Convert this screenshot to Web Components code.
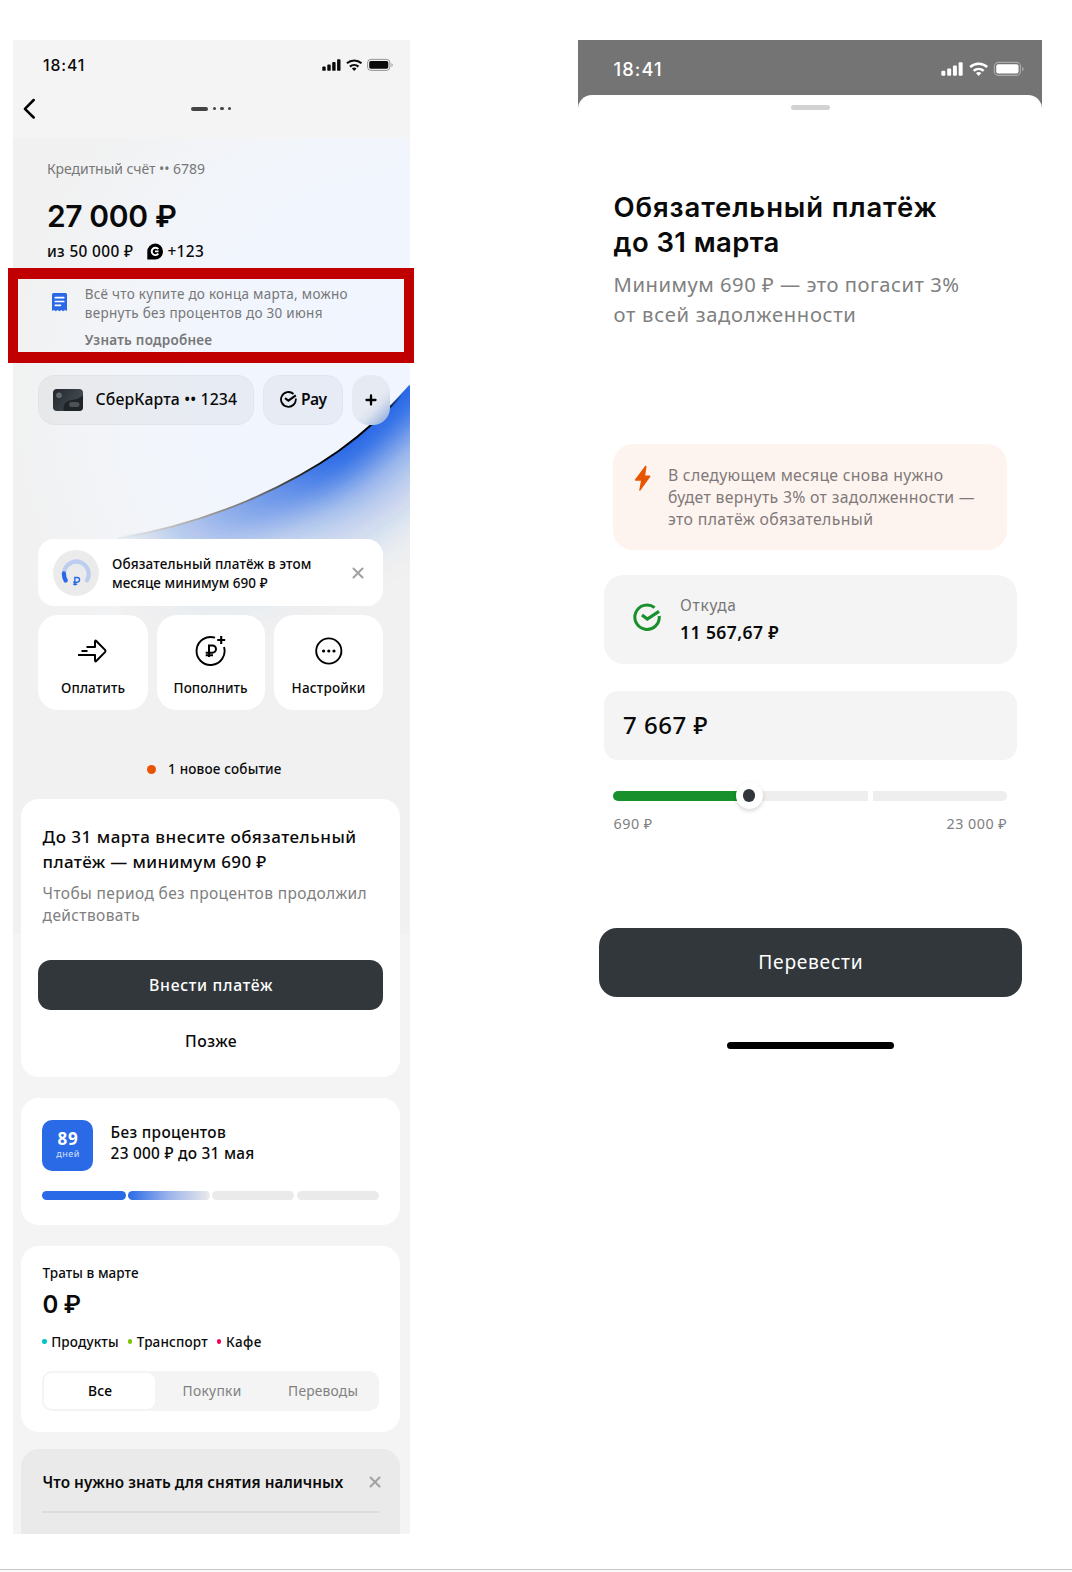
<!DOCTYPE html>
<html lang="ru">
<head>
<meta charset="utf-8">
<title>Кредитный счёт</title>
<style>
html,body{margin:0;background:#fff}
body{font-family:"Noto Sans","Open Sans",sans-serif;color:#0a0a0a}
</style>
</head>
<body>
<bank-board></bank-board>
<script>
const base = `*{box-sizing:border-box}:host{display:block;box-sizing:border-box}svg{display:block;flex:none}`;
function define(name, css, html, setup){
  const tpl = document.createElement('template');
  tpl.innerHTML = '<style>' + base + css + '</style>' + html;
  customElements.define(name, class extends HTMLElement{
    constructor(){ super(); this.attachShadow({mode:'open'}).appendChild(tpl.content.cloneNode(true)); }
    connectedCallback(){ if(setup) setup(this, this.shadowRoot); }
  });
}

/* One line of text: s = size, w = line width, l = line height, f = weight */
define('ui-text', `:host{white-space:pre;width:max-content;flex:none;padding:var(--drop,1px) 0 0 .6px}span{display:inline-block;vertical-align:top}:host([d]){font-family:Inter,"Noto Sans",sans-serif;padding-top:0}`,
 `<span><slot></slot></span>`, (el, root) => {
  const a = n => el.getAttribute(n);
  el.style.fontSize = (a('s') || 14) + 'px';
  el.style.lineHeight = (a('l') || 20) + 'px';
  el.style.height = (a('l') || 20) + 'px';
  if(a('f')) el.style.fontWeight = a('f');
  if(a('w')){
    const sp = root.querySelector('span');
    const nat = sp.getBoundingClientRect().width, n = el.textContent.length;
    el.style.letterSpacing = ((+a('w') - nat) / n).toFixed(3) + 'px';
    el.style.width = a('w') + 'px';
  }
});

define('status-icons', ``, `
<svg width="72" height="14" viewBox="0 0 72 14" fill="currentColor">
<rect x=".3" y="8.6" width="3.4" height="4.2" rx=".9"/><rect x="5.3" y="6.6" width="3.4" height="6.2" rx=".9"/><rect x="10.2" y="4" width="3.4" height="8.8" rx=".9"/><rect x="15.1" y="1.2" width="3.4" height="11.6" rx=".9"/>
<g fill="none" stroke="currentColor" stroke-width="2.1"><path d="M24.9 5.3a11 11 0 0 1 14.6 0"/><path d="M27.9 8.6a6.6 6.6 0 0 1 8.6 0"/></g><path d="M29.9 10.5a3.7 3.7 0 0 1 4.6 0L32.2 13z"/>
<rect x="45.6" y="1.4" width="22.3" height="11" rx="3.3" fill="none" stroke="currentColor" stroke-opacity=".4"/><rect x="47.2" y="3" width="19.1" height="7.8" rx="1.7"/><path d="M69.5 5.2v3.6c1.5-.5 1.5-3.1 0-3.6z" opacity=".45"/></svg>`);

define('phone-header', `:host{height:98px;background:#f4f4f4}
.st{display:flex;align-items:center;justify-content:space-between;height:50px;padding:0 16px 0 29px}
.nav{display:grid;grid-template-columns:40px 1fr 40px;height:37px;align-items:center;padding-left:10px}
.pg{display:flex;gap:4.2px;align-items:center;justify-content:center;padding-right:11px}.pg i{width:3.4px;height:3.4px;border-radius:50%;background:#444}.pg i:first-child{width:17.5px;height:4px;border-radius:2px}`,
`<div class="st"><ui-text d s="15.8" w="42" f="500" style="padding-top:.5px;margin-left:.5px">18:41</ui-text><status-icons></status-icons></div>
<div class="nav"><svg width="14" height="22" viewBox="0 0 14 22" fill="none" stroke="#000" stroke-width="2.5" stroke-linecap="round" stroke-linejoin="round"><path d="M10.700 2 1.900 10.800l8.800 8.700"/></svg><div class="pg"><i></i><i></i><i></i><i></i></div></div>`);

define('hero-art', `:host{position:absolute;inset:98px 0 auto 0;z-index:-1}`, `
<svg width="397" height="796" viewBox="13 138 397 796">
<defs>
<radialGradient id="bg" gradientUnits="userSpaceOnUse" cx="410" cy="390" r="410"><stop offset="0" stop-color="#f0f5ff"/><stop offset=".45" stop-color="#f1f5fe"/><stop offset=".68" stop-color="#f2f5fa"/><stop offset="1" stop-color="#f1f1f1"/></radialGradient>
<linearGradient id="ln" gradientUnits="userSpaceOnUse" x1="115" y1="538" x2="400" y2="390"><stop offset="0" stop-color="#ccc" stop-opacity="0"/><stop offset=".18" stop-color="#bbb"/><stop offset=".48" stop-color="#666"/><stop offset=".7" stop-color="#000"/><stop offset=".93" stop-color="#000"/><stop offset="1" stop-color="#2a6ae6"/></linearGradient>
<linearGradient id="bl" gradientUnits="userSpaceOnUse" x1="120" y1="538" x2="370" y2="430"><stop offset="0" stop-color="#2a6ae6" stop-opacity="0"/><stop offset=".35" stop-color="#2a6ae6" stop-opacity=".38"/><stop offset=".62" stop-color="#2a6ae6" stop-opacity=".66"/><stop offset=".85" stop-color="#2365e6"/></linearGradient>
<clipPath id="u"><path d="M410 385.700C365 437 319 470 247 501 204 519 165 531 117 538L120 640H410z"/></clipPath>
<filter id="f1" x="-30%" y="-50%" width="160%" height="200%"><feGaussianBlur stdDeviation="18"/></filter>
<filter id="f2" x="-30%" y="-50%" width="160%" height="200%"><feGaussianBlur stdDeviation="25"/></filter>
</defs>
<rect x="13" y="138" width="397" height="796" fill="#f1f1f1"/>
<rect x="13" y="138" width="397" height="480" fill="url(#bg)"/>
<g clip-path="url(#u)"><rect x="13" y="370" width="397" height="300" fill="#f1f1f1"/>
<path d="M480 310C365 437 319 470 247 501 204 519 165 531 117 538" fill="none" stroke="url(#bl)" stroke-opacity=".32" stroke-width="168" filter="url(#f2)"/>
<path d="M480 300C365 430 319 466 247 497 204 515 165 527 117 534" fill="none" stroke="url(#bl)" stroke-width="72" filter="url(#f1)"/></g>
<path d="M410 385.700C365 437 319 470 247 501 204 519 165 531 117 538" fill="none" stroke="url(#ln)" stroke-width="1.9"/>
</svg>`);

define('account-summary', `:host{padding:20px 0 0 33.300px}.r{display:flex;align-items:center}svg{margin:1.500px 4px 0 14px}`, `
<ui-text s="14" w="158" style="color:#777">Кредитный счёт •• 6789</ui-text>
<ui-text d s="30" l="36" w="129.500" f="600" style="margin-top:20px">27 000 ₽</ui-text>
<div class="r" style="margin-top:6.500px"><ui-text s="15.4" w="86.500" f="500">из 50 000 ₽</ui-text>
<svg width="16" height="17" viewBox="0 0 16 17"><path d="M8 .5a8 8 0 1 1 0 16H.3V8.500A8 8 0 0 1 8 .5z"/><path d="M11.300 6.100A3.700 3.700 0 1 0 11.300 10.700M8 8.400h3.500" fill="none" stroke="#fff" stroke-width="1.900"/></svg>
<ui-text s="15.4" w="36.700" f="500">+123</ui-text></div>`);

define('grace-note', `:host{margin:7px 0 0 -5px;width:406px;height:95px;border:solid #c00000;border-width:11px 10px;padding:5px 0 0 33.500px;color:#777}
:host{display:flex;gap:17.700px}svg{margin-top:9.500px}`, `
<svg width="15" height="19" viewBox="0 0 15 19"><path fill="#2a6ae6" d="M1.500 0h12A1.500 1.500 0 0 1 15 1.500V18l-2-1.100-1.800 1.400-1.900-1.400-1.800 1.400-1.900-1.400-1.800 1.400L2 16.900 0 18V1.500A1.500 1.500 0 0 1 1.500 0z"/><path d="M3.300 4.700h8.400M3.300 8.500h8.400M3.300 12.300h5.200" stroke="#fff" stroke-width="1.700" stroke-linecap="round"/></svg>
<div><ui-text s="13.5" l="19" w="263">Всё что купите до конца марта, можно</ui-text><ui-text s="13.5" l="19" w="238">вернуть без процентов до 30 июня</ui-text><ui-text s="13.5" l="19" w="127.500" f="600" style="margin-top:8px">Узнать подробнее</ui-text></div>`);

define('card-pill', `:host{display:flex;align-items:center;height:50px;border-radius:17px;background:rgba(20,20,20,.045);border:1px solid rgba(0,0,0,.025);--drop:0px}`, `<slot></slot>`);
define('pill-row', `:host{display:flex;gap:9px;margin:12px 0 0 25px}`, `
<card-pill style="width:216px;padding-left:14px;gap:12px">
<svg width="30" height="22" viewBox="0 0 30 22"><defs><linearGradient id="k" x1="0" x2="1" y2=".5"><stop stop-color="#23282d"/><stop offset="1" stop-color="#454d53"/></linearGradient></defs><rect width="30" height="22" rx="4" fill="url(#k)"/><path d="M10.500 19c.5-5 2.500-7 8-8s8-1.500 11.500-5v12a4 4 0 0 1-4 4H12q-2 0-1.500-3z" fill="#1f2428"/><circle cx="6" cy="6.300" r="2.800" fill="#646b70"/><rect x="16" y="13" width="10.500" height="5" rx="2.500" fill="#4a5258"/></svg>
<ui-text s="15.8" w="141.500" f="500" style="margin-top:-1px">СберКарта •• 1234</ui-text></card-pill>
<card-pill style="width:80px;padding-left:16px;gap:3.400px">
<svg width="17" height="17" viewBox="0 0 17 17" fill="none" stroke="#000" stroke-width="1.800"><path d="M13.500 3A7.400 7.400 0 1 0 15.800 7.500"/><path d="m5 7.200 3.400 2.400 7.400-5.200" stroke-width="2.100"/></svg>
<ui-text s="15.6" w="25.500" f="600" style="margin-top:-1px">Pay</ui-text></card-pill>
<card-pill style="width:38px;justify-content:center;border:0;background:linear-gradient(135deg,#e6eaf3 54%,#dbe2ee 66%,#a9bde2 85%,#7fa0dc)"><svg width="12" height="12" viewBox="0 0 12 12" stroke="#000" stroke-width="2.300" stroke-linecap="round"><path d="M1.500 6h9M6 1.500v9"/></svg></card-pill>`);

define('close-mark', ``, `<svg width="12" height="12" viewBox="0 0 12 12" stroke="#a2a2a2" stroke-width="2.100" stroke-linecap="round"><path d="m1.500 1.500 9 9M10.500 1.500l-9 9"/></svg>`);

define('payment-banner', `:host{display:flex;align-items:center;height:67px;margin:114px 0 0 25px;width:345px;padding:1px 19.500px 0 15px;background:#fff;border-radius:16px}.t{flex:1;padding-left:12.500px}`, `
<svg width="46" height="46" viewBox="0 0 46 46"><circle cx="23" cy="23" r="23" fill="#ebebeb"/><g fill="none" stroke-width="4.300" stroke-linecap="round"><path d="M11.200 21.400A12.400 12.400 0 1 1 34 30.300" stroke="#bccdf0"/><path d="M10.900 23.500c0 3 .5 5 1.800 7" stroke="#2a6ae6"/></g><path d="M21.800 35.500v-8h2.400a2.300 2.300 0 0 1 0 4.700h-4M20.200 34.200h4" fill="none" stroke="#2a6ae6" stroke-width="1.400"/></svg>
<div class="t"><ui-text s="13.5" l="19" w="199.500" f="500">Обязательный платёж в этом</ui-text><ui-text s="13.5" l="19" w="155.500" f="500">месяце минимум 690 ₽</ui-text></div><close-mark></close-mark>`);

define('action-tile', `:host{display:flex;flex-direction:column;align-items:center;height:95px;background:#fff;border-radius:20px;padding-top:20px;gap:10.400px}`, `<slot></slot>`);
define('action-row', `:host{display:grid;grid-template-columns:110px 108px 109px;gap:9px;margin:9px 0 0 25px}`, `
<action-tile><svg width="32" height="32" viewBox="0 0 32 32" fill="none" stroke="#000" stroke-width="2" stroke-linejoin="round"><path d="M9.500 12H18V6.800q0-2 1.500-.6l8.500 8.700q1 1.100 0 2.200L19.500 25.800q-1.500 1.400-1.500-.6V20H1M4.500 16h6"/></svg><ui-text s="13.5" w="64" f="500" style="margin-left:-1px">Оплатить</ui-text></action-tile>
<action-tile><svg width="32" height="32" viewBox="0 0 32 32" fill="none" stroke="#000" stroke-width="1.900"><path d="M20 2.700A14 14 0 1 0 29 12" /><path d="M26.200 1v8M22.200 5h8" stroke-width="2.100"/><path d="M14 22V10.500h3.400a3.600 3.600 0 0 1 0 7.200H10.700M10.700 20.300h7.300" stroke-width="2"/></svg><ui-text s="13.5" w="74" f="500" style="margin-left:-2px">Пополнить</ui-text></action-tile>
<action-tile><svg width="32" height="32" viewBox="0 0 32 32"><circle cx="15.800" cy="16" r="12.600" fill="none" stroke="#000" stroke-width="1.900"/><circle cx="10.600" cy="16" r="1.600"/><circle cx="15.800" cy="16" r="1.600"/><circle cx="21" cy="16" r="1.600"/></svg><ui-text s="13.5" w="74" f="500" style="margin-left:-1px">Настройки</ui-text></action-tile>`);

define('event-line', `:host{display:flex;align-items:center;gap:12px;height:20px;margin:49px 0 0 133.500px;--drop:.6px}i{width:9px;height:9px;border-radius:50%;background:#e85500;margin-top:1px}`, `<i></i><ui-text s="13.5" w="113.500" f="500">1 новое событие</ui-text>`);

define('info-card', `:host{width:379px;margin-left:8px;background:#fff;border-radius:18px}`, `<slot></slot>`);
define('solid-button', `:host{display:flex;align-items:center;justify-content:center;background:#32373b;color:#fff}`, `<slot></slot>`);

define('due-card', `.s{color:#808080}`, `
<info-card style="height:278px;margin-top:20px;padding-top:25.300px">
<div style="padding-left:21px"><div style="--drop:0px"><ui-text s="17" l="25.700" w="314" f="500">До 31 марта внесите обязательный</ui-text><ui-text s="17" l="25.700" w="224" f="500">платёж — минимум 690 ₽</ui-text></div>
<ui-text s="15.5" l="21.200" w="324.500" class="s" style="margin-top:7.300px">Чтобы период без процентов продолжил</ui-text><ui-text s="15.5" l="21.200" w="97.500" class="s">действовать</ui-text></div>
<solid-button style="margin:35.300px 17px 0;width:345px;height:50px;border-radius:13px"><ui-text s="15.8" w="124" f="500" style="--drop:0px;margin-top:-1px">Внести платёж</ui-text></solid-button>
<div style="display:flex;justify-content:center;padding-top:21px"><ui-text s="15.8" w="52" f="500" style="--drop:0px">Позже</ui-text></div>
</info-card>`);

define('grace-card', `.h{display:flex;gap:17px;align-items:center}.b{width:51px;height:51px;border-radius:10px;background:#2a6ae6;color:#fff;display:flex;flex-direction:column;align-items:center;padding-top:8.500px}
.p{display:grid;grid-template-columns:84px 82px 82px 82px;gap:2.200px;margin-top:20px}.p i{height:9px;border-radius:4.500px;background:#eaeaea}.p i:nth-child(1){background:#2a6ae6}.p i:nth-child(2){background:linear-gradient(90deg,#2a6ae6,#9cb4ea 50%,#eaeaea)}`, `
<info-card style="height:127.500px;margin-top:21px;padding:22px 21px"><div class="h"><div class="b"><ui-text s="17" l="20" w="21" f="700">89</ui-text><ui-text s="9" l="11" w="23.500" style="color:#d5e1fa;--drop:0px">дней</ui-text></div>
<div style="margin-top:-6px"><ui-text s="15.4" l="21.300" w="115.500" f="500">Без процентов</ui-text><ui-text s="15.4" l="21.300" w="144" f="500">23 000 ₽ до 31 мая</ui-text></div></div>
<div class="p"><i></i><i></i><i></i><i></i></div></info-card>`);

define('spend-card', `:host{--drop:.2px}.g{display:flex;align-items:center;margin-top:12px}.g i{width:4.600px;height:4.600px;border-radius:50%;margin-right:4px}.g ui-text+i{margin-left:9.500px}
.seg{display:grid;grid-template-columns:111px 113px 109px;width:337px;height:40px;background:#f4f4f4;border-radius:10px;padding:2px;margin-top:19.500px;color:#808080}.seg div{display:flex;align-items:center;justify-content:center;border-radius:8px}.seg div:first-child{background:#fff;color:#000}`, `
<info-card style="height:186.500px;margin-top:20.500px;padding:17.500px 21px">
<ui-text s="13.5" w="96" f="500">Траты в марте</ui-text>
<ui-text d s="24" l="30" w="38" f="600" style="margin-top:6.500px">0 ₽</ui-text>
<div class="g"><i style="background:#00c4c8"></i><ui-text s="13.5" w="67.500" f="500">Продукты</ui-text><i style="background:#7cc400"></i><ui-text s="13.5" w="71" f="500">Транспорт</ui-text><i style="background:#f5005e"></i><ui-text s="13.5" w="36" f="500">Кафе</ui-text></div>
<div class="seg"><div><ui-text s="13.8" w="24" f="500">Все</ui-text></div><div><ui-text s="13.8" w="59">Покупки</ui-text></div><div><ui-text s="13.8" w="70">Переводы</ui-text></div></div>
</info-card>`);

define('cash-card', `.h{display:flex;align-items:center;justify-content:space-between;margin-right:-2px}hr{border:0;margin:19px 0 0;height:2px;background:#dcdcdc}`, `
<info-card style="height:85px;margin-top:16.500px;padding:23px 21px 0;background:#eaeaea;border-radius:18px 18px 0 0"><div class="h"><ui-text s="15.300" w="300.500" f="560" style="--drop:.7px">Что нужно знать для снятия наличных</ui-text><close-mark style="padding-top:1px"></close-mark></div><hr></info-card>`);

define('account-phone', `:host{width:397px;height:1494px;background:#f4f4f4;position:relative;isolation:isolate;flex:none}`, `
<hero-art></hero-art><phone-header></phone-header><account-summary></account-summary><grace-note></grace-note><pill-row></pill-row><payment-banner></payment-banner><action-row></action-row><event-line></event-line><due-card></due-card><grace-card></grace-card><spend-card></spend-card><cash-card></cash-card>`);

define('range-slider', `:host{margin:31px 35.500px 0 35px;position:relative}.t{display:grid;grid-template-columns:136.500px 118px 5.500px 134px;height:10px}.t i:nth-child(1){background:#18902c;border-radius:5px 0 0 5px}.t i:nth-child(2){background:#eee}.t i:nth-child(4){background:#eee;border-radius:0 5px 5px 0}
b{position:absolute;left:122.500px;top:-8.500px;width:27px;height:27px;border-radius:50%;background:#fff;box-shadow:0 2px 4px rgba(0,0,0,.16);display:grid;place-items:center}b:after{content:"";width:12.500px;height:12.500px;border-radius:50%;background:#32373b}
.l{display:flex;justify-content:space-between;margin-top:13.500px;color:#808080;--drop:0px}`, `
<div class="t"><i></i><i></i><i></i><i></i></div><b></b><div class="l"><ui-text s="14.300" w="39">690 ₽</ui-text><ui-text s="14.300" w="60.500">23 000 ₽</ui-text></div>`);

define('pay-sheet', `:host{margin-top:-13px;background:#fff;border-radius:14px 14px 0 0;padding-top:10px;--drop:0px}
.hd{width:39px;height:5px;border-radius:3px;background:#d2d2d2;margin:0 auto}.c{padding-left:35px}.s{color:#808080}
.w{display:flex;margin:114.300px 0 0 35px;width:394px;height:106px;border-radius:20px;background:#fef4ef;padding:20px 21px;gap:16.300px;color:#80797a}
.a{display:flex;align-items:center;margin:25px 0 0 25.500px;width:413.500px;height:89px;border-radius:20px;background:#f4f4f4;padding-left:29px;gap:19px}
.m{display:flex;align-items:center;margin:27px 0 0 25.500px;width:413.500px;height:69px;border-radius:14px;background:#f4f4f4;padding-left:19px}
.home{width:167px;height:6.500px;border-radius:4px;background:#000;margin:45.500px auto 0}`, `
<div class="hd"></div>
<div class="c"><ui-text d s="27.500" l="35" w="324" f="600" style="margin-top:79.500px">Обязательный платёж</ui-text><ui-text d s="27.500" l="35" w="166" f="600">до 31 марта</ui-text>
<ui-text s="20.200" l="29.500" w="346" class="s" style="margin-top:10.800px">Минимум 690 ₽ — это погасит 3%</ui-text><ui-text s="20.200" l="29.500" w="243" class="s">от всей задолженности</ui-text></div>
<div class="w"><svg width="17" height="27" viewBox="0 0 17 27" style="margin-top:1.500px"><path d="M11.300.8 1 14.500q-.6 1.200.6 1.300H7L5.200 25.200q.3 1.100 1.200.2L16.300 11.700q.5-1-.6-1.200h-4.500l1.300-8.700Q12.400.2 11.300.8z" fill="#e85500"/></svg><div><ui-text s="15.800" l="22.100" w="275.500">В следующем месяце снова нужно</ui-text><ui-text s="15.800" l="22.100" w="307">будет вернуть 3% от задолженности —</ui-text><ui-text s="15.800" l="22.100" w="205.500">это платёж обязательный</ui-text></div></div>
<div class="a"><svg width="28" height="28" viewBox="0 0 28 28" fill="none" stroke="#18902c" stroke-width="3" style="margin:-4px 0 0 0"><path d="M21.600 4.600A12.200 12.200 0 1 0 26.200 13"/><path d="m9 12 5.300 4L26 8.300" stroke-width="3.200"/></svg><div style="margin-top:-1px"><ui-text s="15.500" l="27" w="56.500" style="color:#777">Откуда</ui-text><ui-text s="17.500" l="27" w="99" f="600">11 567,67 ₽</ui-text></div></div>
<div class="m"><ui-text s="24" l="30" w="85" f="500">7 667 ₽</ui-text></div>
<range-slider></range-slider>
<solid-button style="margin:93.700px 20px 0 20.500px;height:69px;border-radius:18px"><ui-text s="19.200" l="24" w="105">Перевести</ui-text></solid-button>
<div class="home"></div>`);

define('payment-phone', `:host{width:464px;flex:none}.st{height:68px;background:#747474;color:#fff;padding:0 18px 10px 35px;display:flex;justify-content:space-between;align-items:center}status-icons{width:83.500px;transform:scale(1.170);transform-origin:0 50%}`, `
<div class="st"><ui-text d s="18.300" w="49" f="500">18:41</ui-text><status-icons></status-icons></div><pay-sheet></pay-sheet>`);

define('bank-board', `:host{display:flex;flex-direction:column;width:1072px;height:1572px;overflow:hidden;background:#fff}.r{display:flex;align-items:flex-start;gap:168px;padding:40px 0 0 13px;flex:1}.e{height:3px;border-top:1px solid #c8c8c8;background:#fafafa}`, `
<div class="r"><account-phone></account-phone><payment-phone></payment-phone></div><div class="e"></div>`);
</script>
</body>
</html>
